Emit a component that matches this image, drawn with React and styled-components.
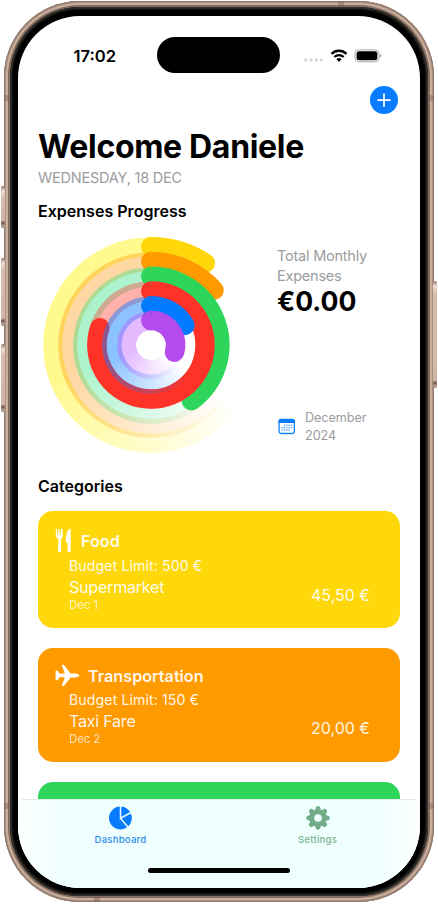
import React from 'react';
import styled, { createGlobalStyle } from 'styled-components';

const GlobalStyle = createGlobalStyle`
  *, *::before, *::after { box-sizing: border-box; }
  body {
    margin: 0;
    background: #fff;
    font-family: Inter, "Liberation Sans", sans-serif;
    color: #000;
  }
`;

const Stage = styled.div`
  position: relative;
  width: 438px;
  height: 904px;
  overflow: hidden;
  padding: 1px 4px 2px;
`;

const Chassis = styled.div`
  height: 901px;
  padding: 6px;
  border-radius: 76px;
  background: #8a7265;
  box-shadow: inset 0 0 1px 1px #8f786b, inset 0 0 1px 2px #a89082, inset 0 0 1px 4px #d0b6a5, inset 0 0 1px 5px #75604f;
`;

const Bezel = styled.div`
  height: 100%;
  padding: 9px 8px 8px;
  border-radius: 70px;
  background: #000;
  box-shadow: inset 0 0 2px 2px #35332f;
`;

const Screen = styled.div`
  height: 100%;
  display: flex;
  flex-direction: column;
  border-radius: 62px;
  background: #fff;
  overflow: hidden;
`;

const SideButton = styled.div`
  position: absolute;
  left: ${p => p.$x}px;
  top: ${p => p.$y}px;
  width: 4px;
  height: ${p => p.$h}px;
  border-radius: 2px;
  background: linear-gradient(#8b7468, #efdccf 5px, #d5bcad 12px, #d0b7a8 calc(100% - 8px), #705b50 calc(100% - 5px), #bfa698 calc(100% - 2px), #8b7468);
`;

const AntennaBand = styled.div`
  position: absolute;
  left: ${p => p.$x}px;
  top: ${p => p.$y}px;
  width: 6px;
  height: 6px;
  background: rgba(125, 98, 86, 0.45);
`;

const StatusBar = styled.div`
  flex: none;
  height: 64px;
  padding-top: 21px;
  display: grid;
  grid-template-columns: 139px 123px 1fr;
`;

const Clock = styled.div`
  padding-left: 55.5px;
  font-size: 16.6px;
  font-weight: 600;
  line-height: 38px;
`;

const Island = styled.div`
  height: 36px;
  border-radius: 18px;
  background: #000;
`;

const StatusIcons = styled.div`
  height: 37px;
  padding-left: 24px;
  svg { display: block; }
`;

const Toolbar = styled.div`
  flex: none;
  height: 41px;
  display: flex;
  justify-content: flex-end;
  padding: 6px 22px 0 0;
`;

const AddButton = styled.button`
  width: 28px;
  height: 28px;
  padding: 0;
  border: 0;
  border-radius: 50%;
  background: #087cff;
  svg { display: block; }
`;

const Content = styled.div`
  flex: 1;
  min-height: 0;
  overflow: hidden;
  padding: 0 20px;
`;

const Title = styled.h1`
  margin: 0;
  font-size: 32px;
  font-weight: 700;
  line-height: 51px;
  letter-spacing: -0.32px;
  white-space: nowrap;
`;

const Today = styled.div`
  font-size: 14.5px;
  line-height: 11px;
  letter-spacing: -0.22px;
  color: #9c9c9e;
`;

const Heading = styled.h2`
  margin: 0;
  padding-top: ${p => p.$top}px;
  font-size: 16px;
  font-weight: 600;
  line-height: 20px;
  letter-spacing: 0.02px;
`;

const Overview = styled.div`
  height: 216px;
  margin-top: 16px;
  padding-left: 5px;
  display: flex;
  gap: 18px;
`;

const RingStack = styled.div`
  width: 216px;
  height: 216px;
  flex: none;
  display: grid;
  place-items: center;
  isolation: isolate;
  > * { grid-area: 1 / 1; z-index: 0; }
  svg { display: block; }
`;

const Track = styled.div`
  width: ${p => p.$r * 2 + 19.5}px;
  height: ${p => p.$r * 2 + 19.5}px;
  border-radius: 50%;
  background: conic-gradient(
    rgba(${p => p.$rgb}, 0) 0deg,
    rgba(${p => p.$rgb}, 0) 125deg,
    rgba(${p => p.$rgb}, ${p => p.$a}) 250deg,
    rgba(${p => p.$rgb}, ${p => p.$a}) 357deg,
    rgba(${p => p.$rgb}, 0) 357deg
  );
  mask: radial-gradient(circle, transparent ${p => p.$r - 10}px, #000 ${p => p.$r - 9.4}px);
`;

const Summary = styled.div`
  width: 110px;
  display: flex;
  flex-direction: column;
  padding-top: 9px;
`;

const SummaryLabel = styled.div`
  font-size: 14.5px;
  line-height: 19.5px;
  letter-spacing: -0.22px;
  color: #9c9c9e;
`;

const Total = styled.div`
  font-size: 26.6px;
  font-weight: 700;
  line-height: 32px;
`;

const Period = styled.div`
  margin-top: 92px;
  display: flex;
  align-items: center;
  gap: 9px;
  padding-left: 1px;
  font-size: 12.7px;
  line-height: 17.6px;
  letter-spacing: -0.1px;
  color: #9c9c9e;
`;

const Card = styled.section`
  height: ${p => p.$h}px;
  margin-top: ${p => p.$top}px;
  padding: ${p => p.$pad}px 30px 0 17px;
  border-radius: 15px;
  background: ${p => p.$bg};
  color: rgba(255, 255, 255, 0.93);
`;

const CardHead = styled.div`
  height: 25px;
  display: flex;
  align-items: center;
  gap: 8px;
  font-size: 16.2px;
  font-weight: 600;
`;

const CardBody = styled.div`
  display: flex;
  justify-content: space-between;
  padding-left: 14px;
`;

const Budget = styled.div`
  font-size: 14.2px;
  line-height: ${p => p.$lh}px;
  letter-spacing: 0.07px;
`;

const Expense = styled.div`
  font-size: 16.1px;
  line-height: ${p => p.$lh}px;
  letter-spacing: -0.25px;
`;

const ExpenseDate = styled.div`
  font-size: 11.3px;
  line-height: 17px;
  opacity: 0.78;
`;

const Amount = styled.div`
  padding-top: ${p => p.$top}px;
  font-size: 16px;
  line-height: 20px;
`;

const TabBar = styled.nav`
  flex: none;
  height: 89px;
  background: linear-gradient(90deg, #fafffe 0, #efffff 12%, #eefffd 50%, #efffff 88%, #fafffe 100%);
  display: flex;
  flex-direction: column;
  align-items: center;
`;

const Tabs = styled.div`
  width: 394px;
  height: 69px;
  border-top: 1px solid #e2e9e7;
  display: grid;
  grid-template-columns: 1fr 1fr;
`;

const Tab = styled.div`
  display: flex;
  flex-direction: column;
  align-items: center;
  padding-top: 6px;
  font-size: 9.6px;
  font-weight: 550;
  line-height: 12px;
  letter-spacing: 0.2px;
  color: ${p => p.$color};
  svg { display: block; margin-bottom: 4px; }
`;

const HomeIndicator = styled.div`
  width: 142px;
  height: 5px;
  border-radius: 3px;
  background: #000;
`;

const STROKE = 19.5;
const CENTER = 108;

const rings = [
  { r: 98.3, end: 33.5, color: '#ffd60a', rgb: '255,244,30', a: 0.5 },
  { r: 83.5, end: 49, color: '#ff9b00', rgb: '255,150,10', a: 0.38 },
  { r: 68.8, end: 144, color: '#2dd55b', rgb: '48,225,130', a: 0.4 },
  { r: 54, end: 288.5, color: '#ff3228', rgb: '255,60,48', a: 0.4 },
  { r: 39.2, end: 60, color: '#007aff', rgb: '10,125,255', a: 0.47 },
  { r: 24.5, end: 107, color: '#b44ced', rgb: '190,90,255', a: 0.42 },
];

const arcPath = (r, end) => {
  const t = (end * Math.PI) / 180;
  const x = CENTER + r * Math.sin(t);
  const y = CENTER - r * Math.cos(t);
  return `M${CENTER} ${CENTER - r}A${r} ${r} 0 ${end > 180 ? 1 : 0} 1 ${x} ${y}`;
};

// Left half of the rounded start of an arc, kept above the translucent tracks.
const startCap = r => {
  const h = STROKE / 2;
  return `M${CENTER + 0.5} ${CENTER - r - h}h-.5A${h} ${h} 0 0 0 ${CENTER} ${CENTER - r + h}h.5z`;
};

const ProgressRings = () => (
  <RingStack>
    {rings.map(ring => (
      <React.Fragment key={ring.color}>
        <Track $r={ring.r} $rgb={ring.rgb} $a={ring.a} />
        <svg width="216" height="216" viewBox="0 0 216 216" fill="none">
          <path d={arcPath(ring.r, ring.end)} stroke={ring.color} strokeWidth={STROKE} strokeLinecap="round" />
        </svg>
      </React.Fragment>
    ))}
    <svg width="216" height="216" viewBox="0 0 216 216">
      {rings.map(ring => (
        <path key={ring.color} d={startCap(ring.r)} fill={ring.color} />
      ))}
    </svg>
  </RingStack>
);

const StatusGlyphs = () => (
  <svg width="80" height="37" viewBox="0 0 80 37">
    <g fill="#d8d8d8">
      <circle cx="1.7" cy="23" r="1.7" />
      <circle cx="7" cy="23" r="1.7" />
      <circle cx="12.2" cy="23" r="1.7" />
      <circle cx="17.4" cy="23" r="1.7" />
    </g>
    <g fill="none" stroke="#000" strokeWidth="2.3">
      <path d="M27.5 16.8a10.800 10.800 0 0 1 15 0" />
      <path d="M30.300 20a6.900 6.900 0 0 1 9.400 0" />
    </g>
    <path d="M35 25l-2.600-2.700a3.800 3.800 0 0 1 5.200 0z" fill="#000" />
    <rect x="51" y="12.800" width="24" height="12" rx="3.800" fill="none" stroke="#a9a9a9" />
    <rect x="52.600" y="14.300" width="20.800" height="9" rx="2.500" fill="#000" />
    <path d="M76.200 17c1.600.6 1.600 3 0 3.600z" fill="#8d8d8d" />
  </svg>
);

const PlusGlyph = () => (
  <svg width="28" height="28" viewBox="0 0 28 28" stroke="#fff" strokeWidth="1.700" strokeLinecap="round">
    <path d="M14 8.200v12M8 14.200h12" />
  </svg>
);

const calendarDots = [
  [6.5, 7], [8.8, 7], [11.1, 7], [13.4, 7],
  [4.2, 9.4], [6.5, 9.4], [8.8, 9.4], [11.1, 9.4], [13.4, 9.4],
  [4.2, 11.8], [6.5, 11.8], [8.8, 11.8], [11.1, 11.8],
];

const CalendarGlyph = () => (
  <svg width="18" height="17" viewBox="0 0 18 17">
    <rect x="1.1" y="1.5" width="15.2" height="14" rx="2.2" fill="none" stroke="#1683f5" strokeWidth="1.3" />
    <path d="M.5 5V3.5A2.5 2.5 0 0 1 3 1h11.4a2.5 2.5 0 0 1 2.5 2.5V5z" fill="#0a7cfa" />
    <g fill="#4a9ff5">
      {calendarDots.map(([x, y]) => (
        <rect key={`${x}-${y}`} x={x - 0.6} y={y - 0.4} width="1.3" height="1.3" />
      ))}
    </g>
  </svg>
);

const ForkKnifeGlyph = () => (
  <svg width="18" height="25" viewBox="0 0 18 25" fill="#fff">
    <path d="M1.3.7c.5 0 .8.3.8.8l.3 5.4h.7l.2-5.4c0-1 1.4-1 1.4 0l.2 5.4h.7l.4-5.4c0-1.1 1.5-1 1.5.1L7.8 8c0 1.500-.8 2.300-2 3l.5 11.500c0 2.200-3.300 2.200-3.300 0L3.500 11C2 10.300 1.200 9.500 1.100 8L.6 1.500C.6 1 .8.700 1.300.700z" />
    <path d="M15 .7c.4 0 .7.300.7.800v21c0 2.200-3.200 2.200-3.200 0l.3-7.200c-1.600-.6-2.100-1.300-2-2.800C11 7 12.300 2 15 .7z" />
  </svg>
);

const PlaneGlyph = () => (
  <svg width="25" height="23" viewBox="0 0 25 23" fill="#fff">
    <path d="M24.300 11.400c0 1.200-2.200 2-4.200 2h-4.600l-6 7.900c-.4.5-.8.7-1.500.7h-.7c-.4 0-.6-.3-.4-.8l3-7.800-5.100-.3-2 2.700c-.3.400-.6.500-1 .5h-.6c-.4 0-.6-.2-.6-.6V7.100c0-.4.200-.6.600-.6h.6c.4 0 .7.100 1 .5l2 2.700 5.100-.3-3-7.800c-.2-.5 0-.8.4-.8H8c.7 0 1.100.2 1.500.7l6 7.900h4.600c2 0 4.200.8 4.200 2z" />
  </svg>
);

const PieGlyph = () => (
  <svg width="24" height="24" viewBox="0 0 24 24">
    <circle cx="11.400" cy="12" r="11.400" fill="#087cff" />
    <path d="M11.500 0v12.200L23 6M11.500 12.200l8 9.500" fill="none" stroke="#ecfbff" strokeWidth="1.500" />
  </svg>
);

const GearGlyph = () => (
  <svg width="24" height="24" viewBox="0 0 24 24">
    <g fill="#72ad88">
      {[0, 45, 90, 135, 180, 225, 270, 315].map(a => (
        <path key={a} d="M9 5L9.900 1.400C10.200 0 13.800 0 14.100 1.400L15 5z" transform={`rotate(${a} 12 12)`} />
      ))}
    </g>
    <circle cx="12" cy="12" r="6.300" fill="none" stroke="#72ad88" strokeWidth="5" />
  </svg>
);

export default function App() {
  return (
    <>
      <GlobalStyle />
      <Stage>
        <SideButton $x={1} $y={186} $h={42} />
        <SideButton $x={1} $y={258} $h={68} />
        <SideButton $x={1} $y={344} $h={68} />
        <SideButton $x={433} $y={281} $h={107} />
        <Chassis>
          <Bezel>
            <Screen>
              <StatusBar>
                <Clock>17:02</Clock>
                <Island />
                <StatusIcons><StatusGlyphs /></StatusIcons>
              </StatusBar>
              <Toolbar>
                <AddButton aria-label="Add"><PlusGlyph /></AddButton>
              </Toolbar>
              <Content>
                <Title>Welcome Daniele</Title>
                <Today>WEDNESDAY, 18 DEC</Today>
                <Heading $top={18}>Expenses Progress</Heading>
                <Overview>
                  <ProgressRings />
                  <Summary>
                    <SummaryLabel>Total Monthly Expenses</SummaryLabel>
                    <Total>€0.00</Total>
                    <Period>
                      <CalendarGlyph />
                      <div>December<br />2024</div>
                    </Period>
                  </Summary>
                </Overview>
                <Heading $top={23}>Categories</Heading>
                <Card $h={117} $top={15} $pad={17} $bg="#ffd80c">
                  <CardHead><ForkKnifeGlyph />Food</CardHead>
                  <CardBody>
                    <div>
                      <Budget $lh={25}>Budget Limit: 500 €</Budget>
                      <Expense $lh={19}>Supermarket</Expense>
                      <ExpenseDate>Dec 1</ExpenseDate>
                    </div>
                    <Amount $top={32}>45,50 €</Amount>
                  </CardBody>
                </Card>
                <Card $h={114} $top={20} $pad={15} $bg="#ff9b00">
                  <CardHead><PlaneGlyph />Transportation</CardHead>
                  <CardBody>
                    <div>
                      <Budget $lh={23}>Budget Limit: 150 €</Budget>
                      <Expense $lh={20}>Taxi Fare</Expense>
                      <ExpenseDate>Dec 2</ExpenseDate>
                    </div>
                    <Amount $top={30}>20,00 €</Amount>
                  </CardBody>
                </Card>
                <Card $h={114} $top={20} $pad={15} $bg="#2dd55b" />
              </Content>
              <TabBar>
                <Tabs>
                  <Tab $color="#2e8fe8"><PieGlyph />Dashboard</Tab>
                  <Tab $color="#7fb594"><GearGlyph />Settings</Tab>
                </Tabs>
                <HomeIndicator />
              </TabBar>
            </Screen>
          </Bezel>
        </Chassis>
        <AntennaBand $x={4} $y={95} />
        <AntennaBand $x={428} $y={95} />
        <AntennaBand $x={4} $y={803} />
        <AntennaBand $x={428} $y={803} />
        <AntennaBand $x={338} $y={1} />
        <AntennaBand $x={94} $y={896} />
      </Stage>
    </>
  );
}
